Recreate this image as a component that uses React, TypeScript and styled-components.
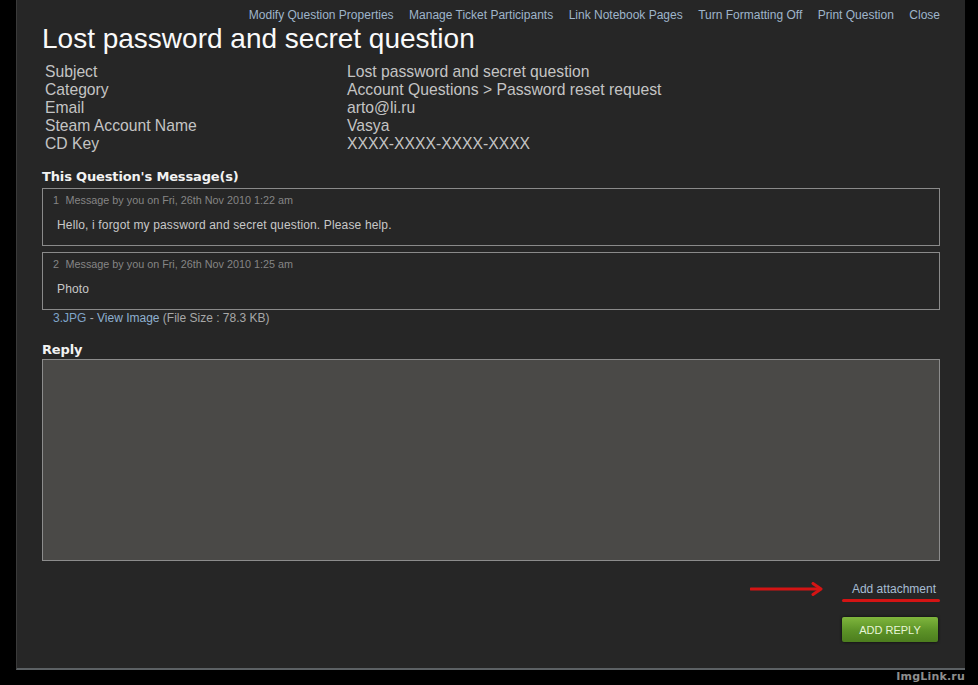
import React from "react";
import styled, { createGlobalStyle } from "styled-components";

const Global = createGlobalStyle`
  html, body { margin: 0; padding: 0; background: #000; }
  body { font-family: "Liberation Sans", Arial, sans-serif; width: 978px; height: 685px; overflow: hidden; }
`;

const Page = styled.div`
  position: relative;
  width: 978px;
  height: 685px;
  background: #000;
`;

const Panel = styled.div`
  margin-left: 16px;
  width: 949px;
  height: 670px;
  background: #262626;
  border-left: 1px solid #3a3a3a;
  border-bottom: 2px solid #5c6164;
  box-sizing: border-box;
  padding: 8px 25px 0 25px;
  display: flex;
  flex-direction: column;
`;

const TopLinks = styled.div`
  display: flex;
  justify-content: flex-end;
  gap: 15.5px;
  font-size: 12px;
  line-height: 15px;
  color: #9fb5cb;
`;

const TopLink = styled.span`
  cursor: pointer;
`;

const Title = styled.h1`
  margin: 0;
  font-size: 28px;
  font-weight: normal;
  line-height: 32px;
  color: #fafafa;
`;

const InfoTable = styled.div`
  display: grid;
  grid-template-columns: 302px 1fr;
  margin: 8px 0 0 3px;
  font-size: 15.7px;
  line-height: 18px;
  color: #c4c4c4;
`;

const SectionHead = styled.h2<{ $top: number }>`
  margin: ${(p) => p.$top}px 0 0 0;
  font-family: "DejaVu Sans", Verdana, sans-serif;
  font-size: 13px;
  font-weight: bold;
  line-height: 18px;
  color: #f2f2f2;
  letter-spacing: -0.15px;
`;

const Messages = styled.div`
  display: flex;
  flex-direction: column;
  gap: 6px;
  margin-top: 2px;
`;

const MessageBox = styled.div`
  border: 1px solid #8a8a8a;
  height: 58px;
  box-sizing: border-box;
  padding: 5px 0 0 10px;
`;

const MessageMeta = styled.div`
  font-size: 10.8px;
  line-height: 13px;
  color: #858585;
  display: flex;
  gap: 6.5px;
`;

const MessageBody = styled.div`
  margin: 11px 0 0 4px;
  font-size: 12px;
  letter-spacing: 0.15px;
  line-height: 15px;
  color: #c8c8c8;
`;

const Attachment = styled.div`
  margin: 1px 0 0 11px;
  font-size: 12px;
  line-height: 15px;
  color: #a8a8a8;
`;

const Link = styled.span<{ $tone?: "dark" }>`
  color: ${(p) => (p.$tone === "dark" ? "#7fa4c8" : "#8fb0d0")};
  cursor: pointer;
`;

const ReplyArea = styled.div`
  margin-top: 0;
  height: 202px;
  box-sizing: border-box;
  background: #4a4947;
  border: 1px solid #8c8c8c;
`;

const AttachRow = styled.div`
  margin-top: 21px;
  display: flex;
  justify-content: flex-end;
  align-items: flex-start;
  gap: 18px;
  height: 26px;
`;

const Arrow = styled.svg`
  margin-top: 0;
`;

const AttachLink = styled.div`
  position: relative;
  font-size: 12px;
  line-height: 15px;
  color: #a7bdd3;
  padding: 0 4px 0 10px;
  cursor: pointer;
  &::after {
    content: "";
    position: absolute;
    left: 0;
    right: 0;
    bottom: -5px;
    height: 3px;
    border-radius: 2px;
    background: #d41414;
  }
`;

const ButtonRow = styled.div`
  margin-top: 9px;
  display: flex;
  justify-content: flex-end;
  padding-right: 2px;
`;

const Button = styled.button`
  width: 96px;
  height: 25px;
  border: none;
  border-radius: 2px;
  background: linear-gradient(#7fb63d, #5c9227 55%, #4c7d1e);
  box-shadow: 0 0 3px rgba(0, 0, 0, 0.8);
  color: #e8f5d8;
  font-family: "Liberation Sans", Arial, sans-serif;
  font-size: 11px;
  padding: 0;
  cursor: pointer;
`;

const Watermark = styled.div`
  position: absolute;
  right: 13px;
  bottom: 2px;
  font-family: "DejaVu Sans", Verdana, sans-serif;
  font-weight: bold;
  font-size: 11px;
  color: #8e8e8e;
  letter-spacing: 0.2px;
`;

const topLinks = [
  "Modify Question Properties",
  "Manage Ticket Participants",
  "Link Notebook Pages",
  "Turn Formatting Off",
  "Print Question",
  "Close",
];

const info: [string, string][] = [
  ["Subject", "Lost password and secret question"],
  ["Category", "Account Questions > Password reset request"],
  ["Email", "arto@li.ru"],
  ["Steam Account Name", "Vasya"],
  ["CD Key", "XXXX-XXXX-XXXX-XXXX"],
];

const messages = [
  { n: 1, date: "Fri, 26th Nov 2010 1:22 am", body: "Hello, i forgot my password and secret question. Please help." },
  { n: 2, date: "Fri, 26th Nov 2010 1:25 am", body: "Photo" },
];

export default function App() {
  return (
    <Page>
      <Global />
      <Panel>
        <TopLinks>
          {topLinks.map((l) => (
            <TopLink key={l}>{l}</TopLink>
          ))}
        </TopLinks>
        <Title>Lost password and secret question</Title>
        <InfoTable>
          {info.map(([k, v]) => (
            <React.Fragment key={k}>
              <span>{k}</span>
              <span>{v}</span>
            </React.Fragment>
          ))}
        </InfoTable>
        <SectionHead $top={15}>This Question's Message(s)</SectionHead>
        <Messages>
          {messages.map((m) => (
            <MessageBox key={m.n}>
              <MessageMeta>
                <span>{m.n}</span>
                <span>Message by you on {m.date}</span>
              </MessageMeta>
              <MessageBody>{m.body}</MessageBody>
            </MessageBox>
          ))}
        </Messages>
        <Attachment>
          <Link $tone="dark">3.JPG</Link> - <Link>View Image</Link> (File Size : 78.3 KB)
        </Attachment>
        <SectionHead $top={15}>Reply</SectionHead>
        <ReplyArea />
        <AttachRow>
          <Arrow width="74" height="14" viewBox="0 0 74 14">
            <path d="M1 7 H70" stroke="#d41414" strokeWidth="3" strokeLinecap="round" />
            <path d="M63 1.5 L71 7 L63 12.5" stroke="#d41414" strokeWidth="3" fill="none" strokeLinecap="round" strokeLinejoin="round" />
          </Arrow>
          <AttachLink>Add attachment</AttachLink>
        </AttachRow>
        <ButtonRow>
          <Button>ADD REPLY</Button>
        </ButtonRow>
      </Panel>
      <Watermark>ImgLink.ru</Watermark>
    </Page>
  );
}
